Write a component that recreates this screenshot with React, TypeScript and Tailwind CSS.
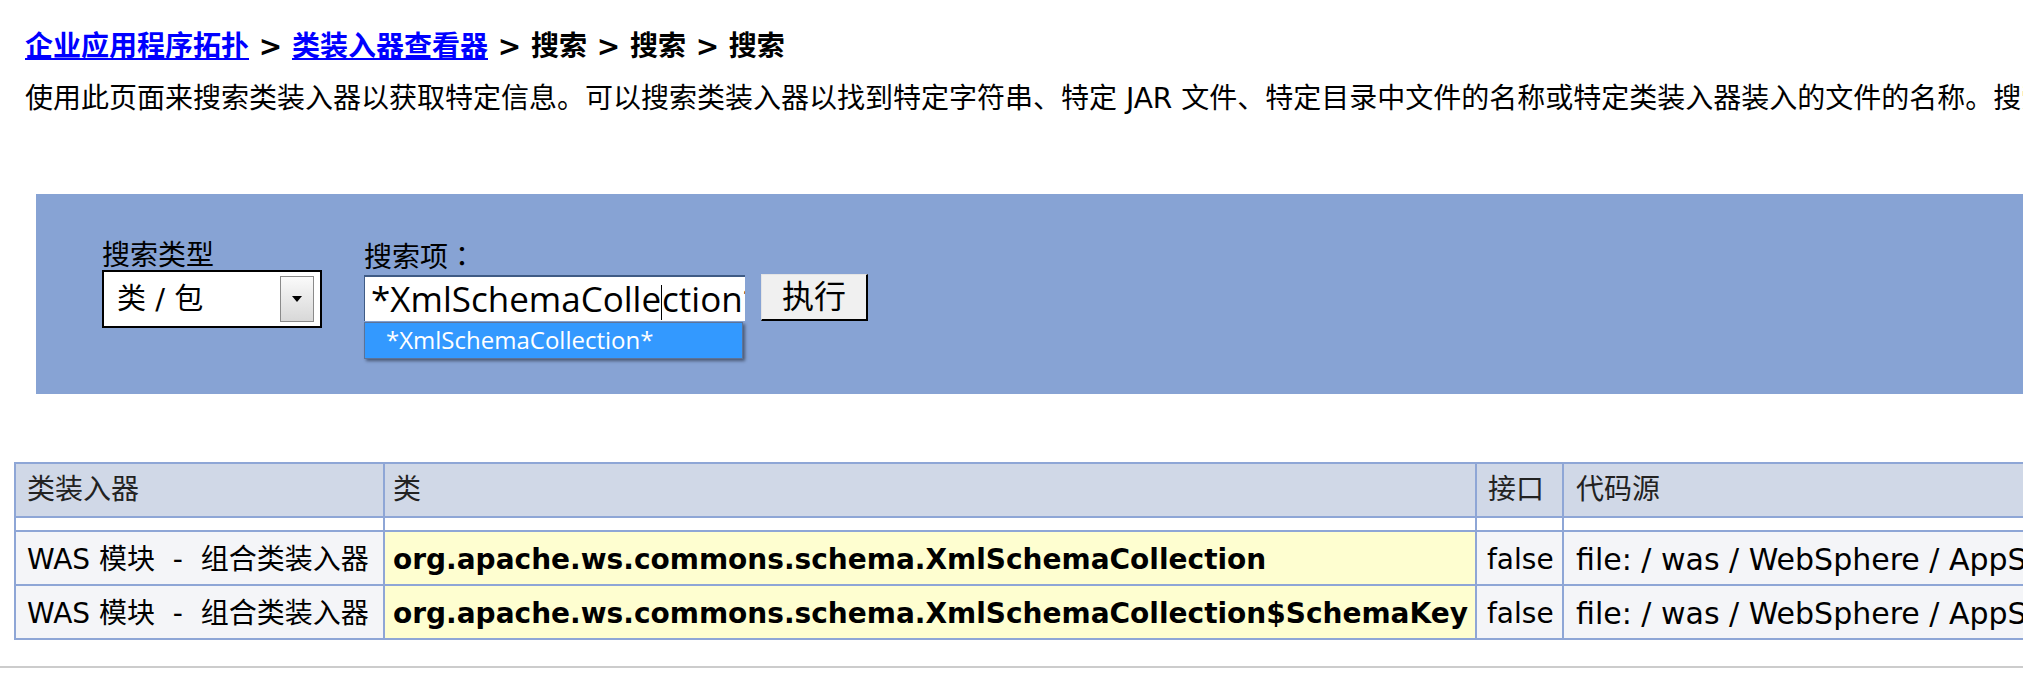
import React from 'react';

const rows = [
  { loader: 'WAS 模块\u00a0 -\u00a0 组合类装入器', cls: 'org.apache.ws.commons.schema.XmlSchemaCollection', iface: 'false', src: 'file: / was / WebSphere / AppServer / plugins / org.apache.axis2.jar' },
  { loader: 'WAS 模块\u00a0 -\u00a0 组合类装入器', cls: 'org.apache.ws.commons.schema.XmlSchemaCollection$SchemaKey', iface: 'false', src: 'file: / was / WebSphere / AppServer / plugins / org.apache.axis2.jar' },
];

export default function App() {
  return (
    <div className="w-full h-[676px] overflow-hidden bg-white text-black font-['DejaVu_Sans','Noto_Sans_CJK_SC',sans-serif]">
      {/* breadcrumb */}
      <div className="pt-[27px] pl-[25px] whitespace-nowrap text-[28px] leading-[40px] font-bold">
        <a href="#" className="text-[#0000ff] underline">企业应用程序拓扑</a>
        <span> &gt; </span>
        <a href="#" className="text-[#0000ff] underline">类装入器查看器</a>
        <span> &gt; 搜索 &gt; 搜索 &gt; 搜索</span>
      </div>
      <p className="mt-[12px] pl-[25px] whitespace-nowrap text-[28px] leading-[40px]">
        使用此页面来搜索类装入器以获取特定信息。可以搜索类装入器以找到特定字符串、特定 JAR 文件、特定目录中文件的名称或特定类装入器装入的文件的名称。搜索结果将显示在下面的表中。
      </p>

      {/* search panel */}
      <div className="mt-[75px] ml-[36px] h-[200px] bg-[#87a3d4] pt-[47px] pl-[66px] flex gap-[42px]">
        <div>
          <div className="text-[28px] leading-[29px]">搜索类型</div>
          <div className="w-[220px] h-[58px] border-2 border-black bg-white flex items-center justify-between pl-[13px] pr-[6px]">
            <span className="text-[29px] leading-none">类 / 包</span>
            <div className="w-[34px] h-[46px] border border-[#8a8a8a] bg-gradient-to-b from-[#fafafa] to-[#d8d8d8] flex items-center justify-center">
              <svg width="10" height="6" viewBox="0 0 10 6"><path d="M0 0h10L5 6z" fill="#000" /></svg>
            </div>
          </div>
        </div>
        <div>
          <div className="text-[28px] leading-[29px]">搜索项<span className="font-['Noto_Sans_CJK_JP',sans-serif]">：</span></div>
          <div className="flex items-start gap-[16px] mt-[3px]">
            <div className="relative">
              <div className="w-[381px] h-[46px] bg-white border-t-2 border-l border-[#3f5b85] overflow-hidden whitespace-nowrap pl-[6px] text-[35px] leading-[43px] font-['Open_Sans',sans-serif]">
                *XmlSchemaColle<span className="inline-block w-0 h-[35px] align-middle border-l border-black" />ction*
              </div>
              <div className="absolute left-0 top-[47px] w-[379px] h-[37px] bg-[#3399ff] border border-[#5c7398] shadow-[2px_2px_3px_rgba(0,0,0,0.45)] pl-[21px] text-white text-[24px] leading-[34px] font-['Open_Sans',sans-serif] whitespace-nowrap">
                *XmlSchemaCollection*
              </div>
            </div>
            <button className="w-[107px] h-[47px] -mt-[1px] bg-[#f0f0f0] border border-t-[#e4e4e4] border-l-[#e4e4e4] border-r-2 border-b-2 border-r-black border-b-black text-[32px] leading-none">
              执行
            </button>
          </div>
        </div>
      </div>

      {/* results table */}
      <div className="mt-[68px] ml-[14px]">
        <table className="border-collapse table-fixed w-[2300px] text-[28px]">
          <colgroup>
            <col className="w-[369px]" />
            <col className="w-[1092px]" />
            <col className="w-[87px]" />
            <col className="w-[752px]" />
          </colgroup>
          <thead>
            <tr className="h-[54px] bg-[#d0d8e7] text-[#222]">
              <th className="border-2 border-[#8ea6d6] px-[11px] text-left font-normal">类装入器</th>
              <th className="border-2 border-[#8ea6d6] px-[8px] text-left font-normal">类</th>
              <th className="border-2 border-[#8ea6d6] px-[11px] text-left font-normal">接口</th>
              <th className="border-2 border-[#8ea6d6] px-[12px] text-left font-normal">代码源</th>
            </tr>
          </thead>
          <tbody>
            <tr className="h-[14px] bg-white">
              <td className="border-2 border-[#8ea6d6]" />
              <td className="border-2 border-[#8ea6d6]" />
              <td className="border-2 border-[#8ea6d6]" />
              <td className="border-2 border-[#8ea6d6]" />
            </tr>
            {rows.map((r, i) => (
              <tr key={i} className="h-[54px]">
                <td className="border-2 border-[#8ea6d6] bg-[#f4f5f8] px-[11px] pt-[3px] whitespace-nowrap overflow-hidden">{r.loader}</td>
                <td className="border-2 border-[#8ea6d6] bg-[#fefed0] px-[8px] pt-[3px] whitespace-nowrap overflow-hidden font-bold">{r.cls}</td>
                <td className="border-2 border-[#8ea6d6] bg-[#f4f5f8] px-[10px] pt-[3px] whitespace-nowrap overflow-hidden">{r.iface}</td>
                <td className="border-2 border-[#8ea6d6] bg-[#f4f5f8] px-[12px] pt-[3px] whitespace-nowrap overflow-hidden text-[30px]">{r.src}</td>
              </tr>
            ))}
          </tbody>
        </table>
      </div>
      <div className="mt-[26px] h-[2px] bg-[#cccccc]" />
    </div>
  );
}
